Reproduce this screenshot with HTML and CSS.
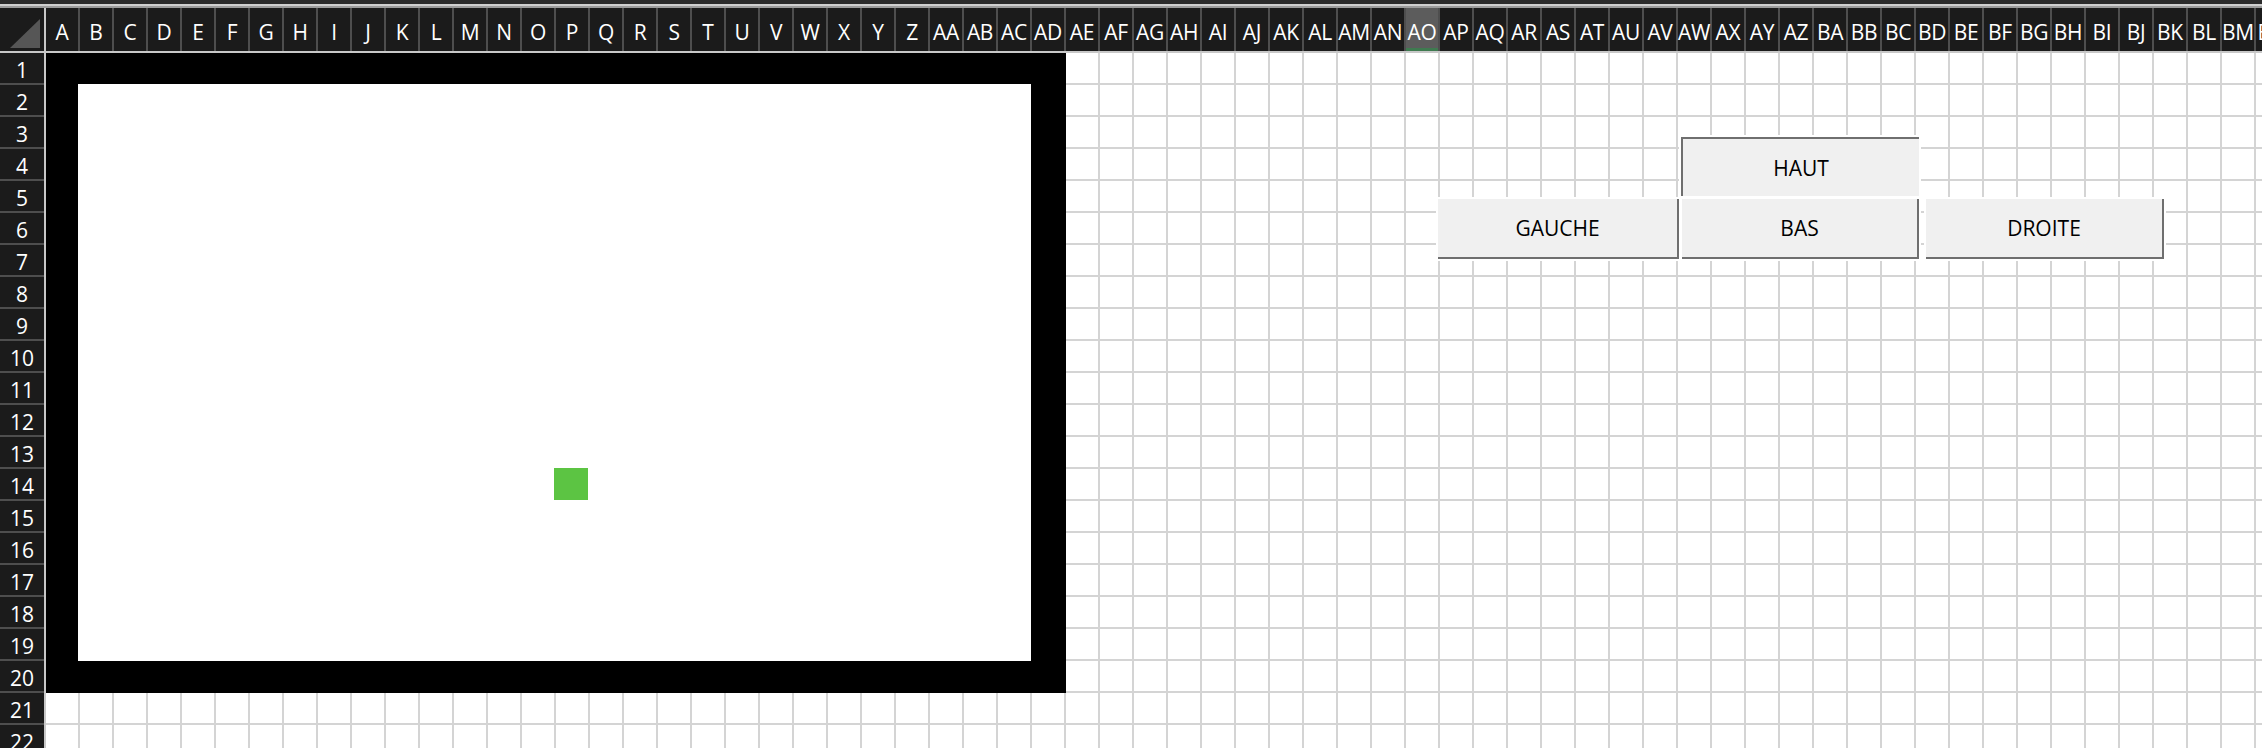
FILE: index.html
```html
<!DOCTYPE html>
<html lang="fr">
<head>
<meta charset="utf-8">
<title>Feuille</title>
<link rel="stylesheet" href="styles.css">
</head>
<body>
<div class="app">
  <div class="chrome">
    <div class="chrome-dark"></div>
    <div class="chrome-light"></div>
    <div class="chrome-mid"></div>
  </div>
  <div class="sheet">
    <div class="corner">
      <svg width="44" height="43" viewBox="0 0 44 43"><polygon points="10,39 40,39 40,10" fill="#565656"/></svg>
    </div>
    <div class="colhead">
      <div class="ch">A</div><div class="ch">B</div><div class="ch">C</div><div class="ch">D</div><div class="ch">E</div><div class="ch">F</div><div class="ch">G</div><div class="ch">H</div><div class="ch">I</div><div class="ch">J</div><div class="ch">K</div><div class="ch">L</div><div class="ch">M</div><div class="ch">N</div><div class="ch">O</div><div class="ch">P</div><div class="ch">Q</div><div class="ch">R</div><div class="ch">S</div><div class="ch">T</div><div class="ch">U</div><div class="ch">V</div><div class="ch">W</div><div class="ch">X</div><div class="ch">Y</div><div class="ch">Z</div>
      <div class="ch">AA</div><div class="ch">AB</div><div class="ch">AC</div><div class="ch">AD</div><div class="ch">AE</div><div class="ch">AF</div><div class="ch">AG</div><div class="ch">AH</div><div class="ch">AI</div><div class="ch">AJ</div><div class="ch">AK</div><div class="ch">AL</div><div class="ch">AM</div><div class="ch">AN</div><div class="ch ch-active">AO</div><div class="ch">AP</div><div class="ch">AQ</div><div class="ch">AR</div><div class="ch">AS</div><div class="ch">AT</div><div class="ch">AU</div><div class="ch">AV</div><div class="ch">AW</div><div class="ch">AX</div><div class="ch">AY</div><div class="ch">AZ</div>
      <div class="ch">BA</div><div class="ch">BB</div><div class="ch">BC</div><div class="ch">BD</div><div class="ch">BE</div><div class="ch">BF</div><div class="ch">BG</div><div class="ch">BH</div><div class="ch">BI</div><div class="ch">BJ</div><div class="ch">BK</div><div class="ch">BL</div><div class="ch">BM</div><div class="ch">BN</div>
    </div>
    <div class="rowhead">
      <div class="rh">1</div><div class="rh">2</div><div class="rh">3</div><div class="rh">4</div><div class="rh">5</div><div class="rh">6</div><div class="rh">7</div><div class="rh">8</div><div class="rh">9</div><div class="rh">10</div><div class="rh">11</div>
      <div class="rh">12</div><div class="rh">13</div><div class="rh">14</div><div class="rh">15</div><div class="rh">16</div><div class="rh">17</div><div class="rh">18</div><div class="rh">19</div><div class="rh">20</div><div class="rh">21</div><div class="rh">22</div>
    </div>
    <div class="body">
      <div class="frame"><div class="board"></div></div>
      <div class="snake"></div>
      <div class="controls">
        <div class="btn btn-pressed btn-up">HAUT</div>
        <div class="btn btn-left">GAUCHE</div>
        <div class="btn btn-down">BAS</div>
        <div class="btn btn-right">DROITE</div>
      </div>
    </div>
  </div>
</div>
</body>
</html>
```

FILE: styles.css
```css
* { box-sizing: border-box; }
html, body {
  margin: 0;
  padding: 0;
  width: 2262px;
  height: 748px;
  overflow: hidden;
  background: #ffffff;
  font-family: "Open Sans", "Liberation Sans", sans-serif;
}
.app {
  display: flex;
  flex-direction: column;
  width: 2262px;
  height: 748px;
}
.chrome {
  display: flex;
  flex-direction: column;
  flex: none;
}
.chrome-dark { height: 4px; background: #2b2b2b; }
.chrome-light { height: 2px; background: #cfcfcf; }
.chrome-mid { height: 2px; background: #9c9c9c; }

.sheet {
  flex: 1;
  display: grid;
  grid-template-columns: 46px 1fr;
  grid-template-rows: 45px 1fr;
  min-height: 0;
  overflow: hidden;
}
.corner {
  background: #1b1b1b;
  border-right: 2px solid #c8c8c8;
  border-bottom: 2px solid #c8c8c8;
  display: flex;
  align-items: flex-start;
  padding-top: 1px;
}
.corner svg { display: block; }

.colhead {
  display: flex;
  background: #1b1b1b;
  border-bottom: 2px solid #c8c8c8;
  overflow: hidden;
}
.ch {
  flex: none;
  width: 34px;
  height: 43px;
  border-right: 2px solid #4e4e4e;
  display: flex;
  align-items: center;
  justify-content: center;
  padding-top: 4px;
  color: #ffffff;
  font-size: 21px;
  font-weight: 500;
  white-space: nowrap;
  letter-spacing: -0.3px;
}
.ch-active {
  background: #5c5c5c;
  box-shadow: inset 0 -3px 0 #3f7a50;
}

.rowhead {
  display: flex;
  flex-direction: column;
  background: #1b1b1b;
  border-right: 2px solid #c8c8c8;
  overflow: hidden;
}
.rh {
  flex: none;
  height: 32px;
  border-bottom: 2px solid #4e4e4e;
  display: flex;
  align-items: center;
  justify-content: center;
  padding-top: 4px;
  color: #ffffff;
  font-size: 21px;
  font-weight: 500;
}

.body {
  position: relative;
  display: grid;
  grid-template-columns: repeat(66, 34px);
  grid-template-rows: repeat(22, 32px);
  background-color: #ffffff;
  background-image:
    linear-gradient(to right, transparent 32px, #d4d4d4 32px),
    linear-gradient(to bottom, transparent 30px, #d4d4d4 30px);
  background-size: 34px 100%, 100% 32px;
  overflow: hidden;
}
.frame {
  grid-column: 1 / 31;
  grid-row: 1 / 21;
  margin-left: -1px;
  background: #000000;
  padding: 31px 35px 32px 33px;
  display: flex;
}
.board {
  flex: 1;
  background: #ffffff;
}
.snake {
  grid-column: 16;
  grid-row: 14;
  margin: -1px 0 0 -2px;
  width: 34px;
  height: 32px;
  background: #5cc443;
}

.controls {
  position: absolute;
  left: 1392px;
  top: 84px;
  display: grid;
  grid-template-columns: 241px 240px 239px;
  grid-template-rows: 59px 60px;
  column-gap: 0;
  row-gap: 3px;
}
.btn {
  background: #f0f0f0;
  color: #000000;
  font-size: 21px;
  display: flex;
  align-items: center;
  justify-content: center;
  border-right: 2px solid #6f6f6f;
  border-bottom: 2px solid #6f6f6f;
  box-shadow: 0 0 0 2px #ffffff;
}
.btn-pressed {
  border: none;
  border-top: 2px solid #6f6f6f;
  border-left: 2px solid #6f6f6f;
}
.btn-up { grid-column: 2; grid-row: 1; margin-left: 2px; }
.btn-left { grid-column: 1; grid-row: 2; }
.btn-down { grid-column: 2; grid-row: 2; margin-left: 3px; }
.btn-right { grid-column: 3; grid-row: 2; margin-left: 7px; margin-right: -6px; }
```
